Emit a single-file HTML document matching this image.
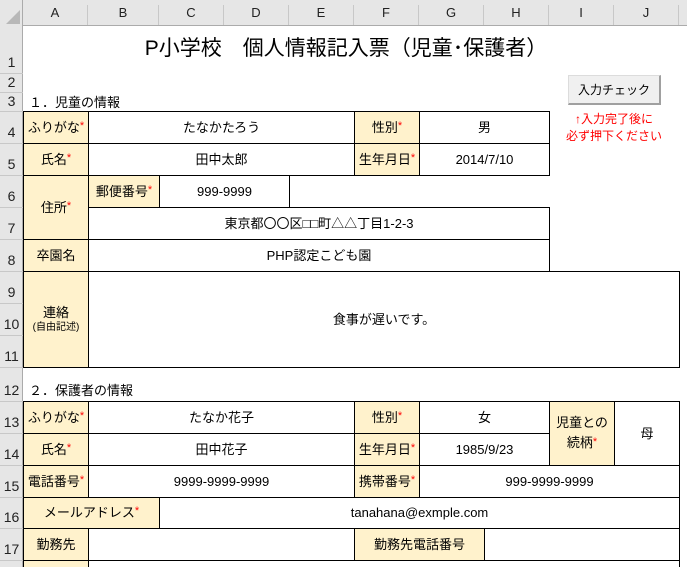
<!DOCTYPE html>
<html><head><meta charset="utf-8"><style>
*{margin:0;padding:0;box-sizing:border-box}
html,body{width:687px;height:567px;overflow:hidden}
body{background:#fff;position:relative;font-family:"Liberation Sans","Noto Sans CJK JP",sans-serif;font-size:13px;color:#000}
.h{position:absolute;color:#222;font-size:13px;text-align:center}
.c{position:absolute;border:1px solid #000;display:flex;align-items:center;justify-content:center;line-height:16px;text-align:center;white-space:nowrap}
.y{background:#fff2cc}
.r{color:#f00;font-size:11px;position:relative;top:-2px}
.t{position:absolute;white-space:nowrap;line-height:16px}
.ln{position:absolute;left:0;width:23px;height:1px;background:#c8c8c8}
.rn{position:absolute;width:23px}
</style></head><body>
<div style="position:absolute;left:0;top:0;width:687px;height:26px;background:#e6e6e6;border-bottom:1px solid #ababab"></div>
<div style="position:absolute;left:0;top:0;width:23px;height:567px;background:#e6e6e6;border-right:1px solid #ababab"></div>
<div style="position:absolute;left:6px;top:10px;width:0;height:0;border-left:14px solid transparent;border-bottom:14px solid #b8b8b8"></div>
<div class="h" style="left:23px;top:5px;width:65px;border-right:1px solid #c8c8c8;height:20px">A</div>
<div class="h" style="left:88px;top:5px;width:71px;border-right:1px solid #c8c8c8;height:20px">B</div>
<div class="h" style="left:159px;top:5px;width:65px;border-right:1px solid #c8c8c8;height:20px">C</div>
<div class="h" style="left:224px;top:5px;width:65px;border-right:1px solid #c8c8c8;height:20px">D</div>
<div class="h" style="left:289px;top:5px;width:65px;border-right:1px solid #c8c8c8;height:20px">E</div>
<div class="h" style="left:354px;top:5px;width:65px;border-right:1px solid #c8c8c8;height:20px">F</div>
<div class="h" style="left:419px;top:5px;width:65px;border-right:1px solid #c8c8c8;height:20px">G</div>
<div class="h" style="left:484px;top:5px;width:65px;border-right:1px solid #c8c8c8;height:20px">H</div>
<div class="h" style="left:549px;top:5px;width:65px;border-right:1px solid #c8c8c8;height:20px">I</div>
<div class="h" style="left:614px;top:5px;width:65px;border-right:1px solid #c8c8c8;height:20px">J</div>
<div class="ln" style="top:73px"></div><div class="ln" style="top:92px"></div><div class="ln" style="top:111px"></div><div class="ln" style="top:143px"></div><div class="ln" style="top:175px"></div><div class="ln" style="top:207px"></div><div class="ln" style="top:239px"></div><div class="ln" style="top:271px"></div><div class="ln" style="top:303px"></div><div class="ln" style="top:335px"></div><div class="ln" style="top:367px"></div><div class="ln" style="top:401px"></div><div class="ln" style="top:433px"></div><div class="ln" style="top:465px"></div><div class="ln" style="top:497px"></div><div class="ln" style="top:528px"></div><div class="ln" style="top:560px"></div>
<div style="position:absolute;left:0;top:0;width:23px;font-size:14px;color:#222;text-align:center">
<div class="rn" style="top:54px">1</div><div class="rn" style="top:74px">2</div><div class="rn" style="top:93px">3</div><div class="rn" style="top:124px">4</div><div class="rn" style="top:156px">5</div><div class="rn" style="top:188px">6</div><div class="rn" style="top:220px">7</div><div class="rn" style="top:252px">8</div><div class="rn" style="top:284px">9</div><div class="rn" style="top:316px">10</div><div class="rn" style="top:348px">11</div><div class="rn" style="top:382px">12</div><div class="rn" style="top:414px">13</div><div class="rn" style="top:446px">14</div><div class="rn" style="top:478px">15</div><div class="rn" style="top:509px">16</div><div class="rn" style="top:541px">17</div>
</div>

<div class="t" style="left:23px;width:646px;top:36px;text-align:center;font-size:21px;line-height:26px">P小学校　個人情報記入票（児童･保護者）</div>
<div class="t" style="left:29px;top:95px">１．児童の情報</div>

<div style="position:absolute;left:568px;top:75px;width:93px;height:30px;background:#f0f0f0;border:1px solid #dcdcdc;border-right:2px solid #a0a0a0;border-bottom:2px solid #a0a0a0;display:flex;align-items:center;justify-content:center;font-size:12px">入力チェック</div>
<div class="t" style="left:549px;width:130px;top:111px;text-align:center;color:#f00;font-size:12px;line-height:17px">↑入力完了後に<br>必ず押下ください</div>

<div class="c y" style="left:23px;top:111px;width:66px;height:33px">ふりがな<span class="r">*</span></div>
<div class="c" style="left:88px;top:111px;width:267px;height:33px">たなかたろう</div>
<div class="c y" style="left:354px;top:111px;width:66px;height:33px">性別<span class="r">*</span></div>
<div class="c" style="left:419px;top:111px;width:131px;height:33px">男</div>
<div class="c y" style="left:23px;top:143px;width:66px;height:33px">氏名<span class="r">*</span></div>
<div class="c" style="left:88px;top:143px;width:267px;height:33px">田中太郎</div>
<div class="c y" style="left:354px;top:143px;width:66px;height:33px">生年月日<span class="r">*</span></div>
<div class="c" style="left:419px;top:143px;width:131px;height:33px">2014/7/10</div>
<div class="c y" style="left:23px;top:175px;width:66px;height:65px">住所<span class="r">*</span></div>
<div class="c y" style="left:88px;top:175px;width:72px;height:33px">郵便番号<span class="r">*</span></div>
<div class="c" style="left:159px;top:175px;width:131px;height:33px">999-9999</div>
<div class="c" style="left:88px;top:207px;width:462px;height:33px">東京都〇〇区□□町△△丁目1-2-3</div>
<div class="c y" style="left:23px;top:239px;width:66px;height:33px">卒園名</div>
<div class="c" style="left:88px;top:239px;width:462px;height:33px">PHP認定こども園</div>
<div class="c y" style="left:23px;top:271px;width:66px;height:97px;flex-direction:column">連絡<span style="font-size:10px;line-height:13px">(自由記述)</span></div>
<div class="c" style="left:88px;top:271px;width:592px;height:97px">食事が遅いです。</div>

<div class="t" style="left:29px;top:383px">２．保護者の情報</div>

<div class="c y" style="left:23px;top:401px;width:66px;height:33px">ふりがな<span class="r">*</span></div>
<div class="c" style="left:88px;top:401px;width:267px;height:33px">たなか花子</div>
<div class="c y" style="left:354px;top:401px;width:66px;height:33px">性別<span class="r">*</span></div>
<div class="c" style="left:419px;top:401px;width:131px;height:33px">女</div>
<div class="c y" style="left:549px;top:401px;width:66px;height:65px;flex-direction:column;line-height:20px">児童との<span>続柄<span class="r">*</span></span></div>
<div class="c" style="left:614px;top:401px;width:66px;height:65px">母</div>
<div class="c y" style="left:23px;top:433px;width:66px;height:33px">氏名<span class="r">*</span></div>
<div class="c" style="left:88px;top:433px;width:267px;height:33px">田中花子</div>
<div class="c y" style="left:354px;top:433px;width:66px;height:33px">生年月日<span class="r">*</span></div>
<div class="c" style="left:419px;top:433px;width:131px;height:33px">1985/9/23</div>
<div class="c y" style="left:23px;top:465px;width:66px;height:33px">電話番号<span class="r">*</span></div>
<div class="c" style="left:88px;top:465px;width:267px;height:33px">9999-9999-9999</div>
<div class="c y" style="left:354px;top:465px;width:66px;height:33px">携帯番号<span class="r">*</span></div>
<div class="c" style="left:419px;top:465px;width:261px;height:33px">999-9999-9999</div>
<div class="c y" style="left:23px;top:497px;width:137px;height:32px">メールアドレス<span class="r">*</span></div>
<div class="c" style="left:159px;top:497px;width:521px;height:32px">tanahana@exmple.com</div>
<div class="c y" style="left:23px;top:528px;width:66px;height:33px">勤務先</div>
<div class="c" style="left:88px;top:528px;width:267px;height:33px"></div>
<div class="c y" style="left:354px;top:528px;width:131px;height:33px">勤務先電話番号</div>
<div class="c" style="left:484px;top:528px;width:196px;height:33px"></div>
<div class="c y" style="left:23px;top:560px;width:66px;height:20px"></div>
<div class="c" style="left:88px;top:560px;width:592px;height:20px"></div>
</body></html>
